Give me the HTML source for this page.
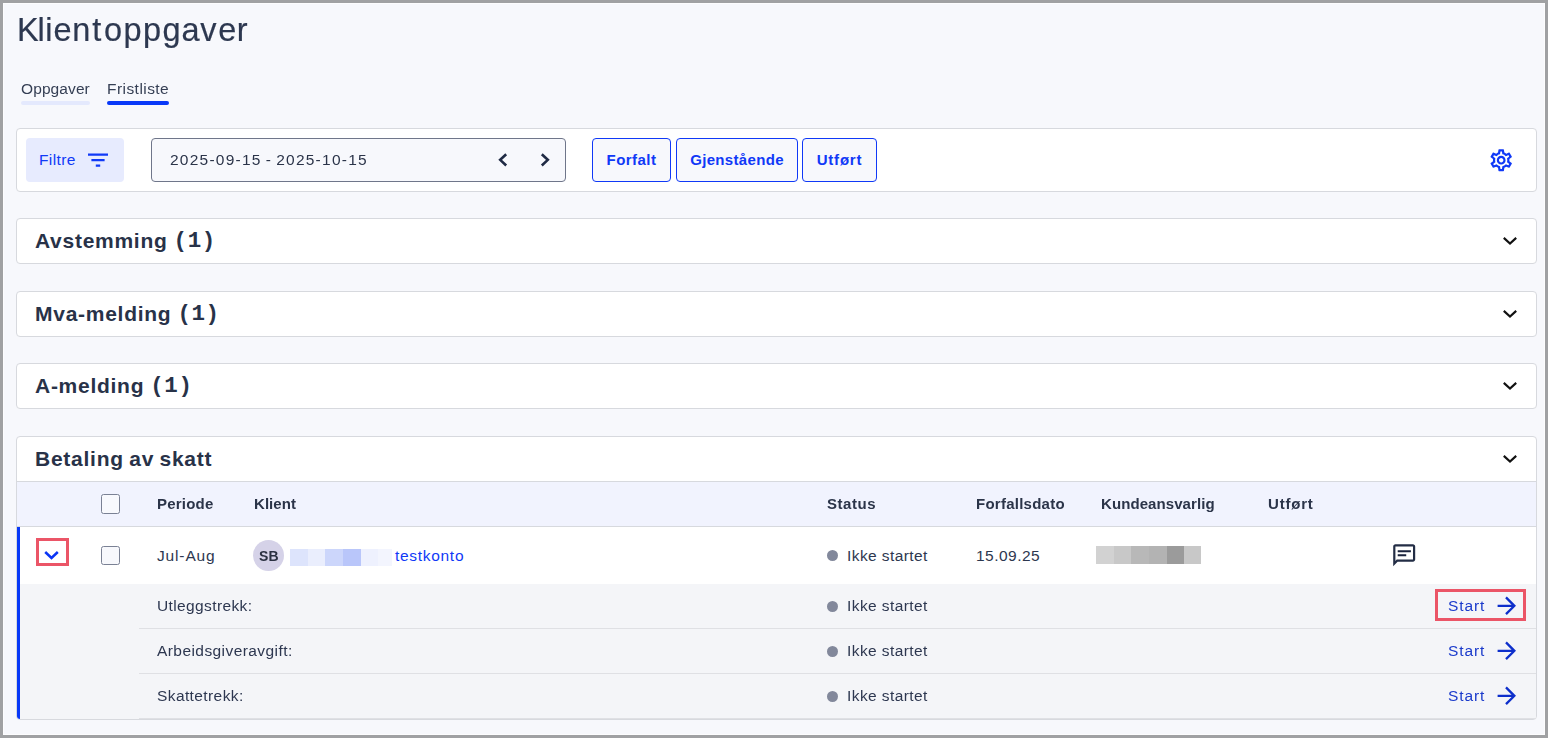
<!DOCTYPE html>
<html lang="no">
<head>
<meta charset="utf-8">
<title>Klientoppgaver</title>
<style>
*{box-sizing:border-box;margin:0;padding:0}
html,body{width:1548px;height:738px;overflow:hidden}
body{font-family:"Liberation Sans",sans-serif;background:#f7f8fc;color:#2b3449;position:relative;font-size:15.5px}
.frame{position:absolute;left:0;top:0;width:1548px;height:738px;border:3px solid #a0a1a3;pointer-events:none;z-index:50;box-shadow:inset 0 0 0 1px #fdfdfe}
.abs{position:absolute}
.g{will-change:transform}
.t{position:absolute;white-space:nowrap;line-height:20px}
h1.t{-webkit-text-stroke:0.2px;font-size:32.5px;font-weight:400;line-height:40px;left:16.5px;top:10px;color:#2d3850}
.tab{font-size:15.5px;top:79px;color:#353f54}
.ul{position:absolute;height:4px;border-radius:2px;top:101px}
.card{position:absolute;left:16px;width:1521px;background:#fff;border:1px solid #d7d9de;border-radius:4px}
.btn{position:absolute;top:138px;height:44px;border:1px solid #1039f7;border-radius:4px;background:#f7f8fc;color:#1039f7;font-weight:700;font-size:15px;line-height:42px;text-align:center;white-space:nowrap}
.acc{font-size:21px;font-weight:700;line-height:24px;left:35px;color:#283248;letter-spacing:0.73px}
.num{font-family:"Liberation Mono",monospace;font-size:22.5px;font-weight:700;letter-spacing:0.6px;margin-left:6px;line-height:20px;position:relative;top:-1px}
.chev{position:absolute;left:1502px;width:16px;height:10px}
.th{font-weight:700;font-size:15px;top:494px;color:#2b3449}
.td{font-size:15.5px;color:#2d3750}
.dot{position:absolute;left:827px;width:11px;height:11px;border-radius:50%;background:#82889b}
.cb{position:absolute;left:101px;width:19px;height:19px;border:1px solid #7a8194;border-radius:2.5px}
.sep{position:absolute;left:139px;width:1397px;height:1px;background:#dfe0e4}
.start{font-size:15.5px;color:#1a3acb;left:1448px;letter-spacing:0.9px}
.arrow{position:absolute;left:1492.7px;width:27.6px;height:27.6px}
</style>
</head>
<body>
<h1 class="t g"><span style="letter-spacing:-1.2px">K</span><span style="letter-spacing:0.6px">l</span><span style="letter-spacing:0.9px">i</span><span style="letter-spacing:0.75px">e</span><span style="letter-spacing:2.0px">n</span><span style="letter-spacing:2.6px">t</span><span style="letter-spacing:1.5px">o</span><span style="letter-spacing:1.3px">p</span><span style="letter-spacing:1.5px">p</span><span style="letter-spacing:0.9px">g</span><span style="letter-spacing:0.7px">a</span><span style="letter-spacing:1.8px">v</span><span style="letter-spacing:0.4px">e</span><span style="letter-spacing:0px">r</span></h1>

<span class="t tab g" style="left:20.5px;letter-spacing:0.1px">Oppgaver</span>
<span class="t tab g" style="left:107px;letter-spacing:0.45px">Fristliste</span>
<div class="ul" style="left:21px;width:69px;background:#e4e9fd"></div>
<div class="ul" style="left:107px;width:62px;background:#0838f8"></div>

<!-- filter bar -->
<div class="card" style="top:128px;height:64px"></div>
<div class="abs" style="left:26px;top:138px;width:98px;height:44px;background:#e7ebfe;border-radius:4px"></div>
<span class="t" style="left:39px;top:150px;font-size:15.5px;color:#1039f7;letter-spacing:0.4px">Filtre</span>
<svg class="abs" style="left:88px;top:153px" width="20" height="14" viewBox="0 0 20 14"><path d="M0 0.5h20v2.2H0zM3.4 6h13.2v2.2H3.4zM7.8 11.5h4.4v2.2H7.8z" fill="#1039f7"/></svg>

<div class="abs" style="left:151px;top:138px;width:415px;height:44px;border:1px solid #6f768a;border-radius:4px;background:#f7f8fc"></div>
<span class="t g" style="left:170px;top:150px;font-size:15.5px;color:#2b3449;letter-spacing:1.24px;word-spacing:-1.5px">2025-09-15 - 2025-10-15</span>
<svg class="abs" style="left:496.700px;top:151.800px" width="12" height="16" viewBox="0 0 12 16"><path d="M9.200 2.200L3.200 7.850l6 5.650" fill="none" stroke="#1f2a44" stroke-width="2.600"/></svg>
<svg class="abs" style="left:538.700px;top:151.800px" width="12" height="16" viewBox="0 0 12 16"><path d="M2.800 2.200L8.800 7.850l-6 5.650" fill="none" stroke="#1f2a44" stroke-width="2.600"/></svg>

<div class="btn" style="left:592px;width:79px;letter-spacing:0.45px">Forfalt</div>
<div class="btn" style="left:676px;width:122px;letter-spacing:0.33px">Gjenstående</div>
<div class="btn" style="left:802px;width:75px;letter-spacing:0.8px">Utført</div>

<!-- gear -->
<svg class="abs" style="left:1488px;top:146.5px" width="26.4" height="26.4" viewBox="0 0 24 24"><path fill="#1039f7" d="M19.43 12.98c.04-.32.07-.64.07-.98 0-.34-.03-.66-.07-.98l2.11-1.65c.19-.15.24-.42.12-.64l-2-3.46c-.09-.16-.26-.25-.44-.25-.06 0-.12.01-.17.03l-2.49 1c-.52-.4-1.08-.73-1.69-.98l-.38-2.65C14.46 2.18 14.25 2 14 2h-4c-.25 0-.46.18-.49.42l-.38 2.65c-.61.25-1.17.59-1.69.98l-2.49-1c-.06-.02-.12-.03-.18-.03-.17 0-.34.09-.43.25l-2 3.46c-.13.22-.07.49.12.64l2.11 1.65c-.04.32-.07.65-.07.98 0 .33.03.66.07.98l-2.11 1.65c-.19.15-.24.42-.12.64l2 3.46c.09.16.26.25.44.25.06 0 .12-.01.17-.03l2.49-1c.52.4 1.08.73 1.69.98l.38 2.65c.03.24.24.42.49.42h4c.25 0 .46-.18.49-.42l.38-2.65c.61-.25 1.17-.59 1.69-.98l2.49 1c.06.02.12.03.18.03.17 0 .34-.09.43-.25l2-3.46c.12-.22.07-.49-.12-.64l-2.11-1.65zm-1.98-1.71c.04.31.05.52.05.73 0 .21-.02.43-.05.73l-.14 1.13.89.7 1.08.84-.7 1.21-1.27-.51-1.04-.42-.9.68c-.43.32-.84.56-1.25.73l-1.06.43-.16 1.13-.2 1.35h-1.4l-.19-1.35-.16-1.13-1.06-.43c-.43-.18-.83-.41-1.23-.71l-.91-.7-1.06.43-1.27.51-.7-1.21 1.08-.84.89-.7-.14-1.13c-.03-.31-.05-.54-.05-.74s.02-.43.05-.73l.14-1.13-.89-.7-1.08-.84.7-1.21 1.27.51 1.04.42.9-.68c.43-.32.84-.56 1.25-.73l1.06-.43.16-1.13.2-1.35h1.39l.19 1.35.16 1.13 1.06.43c.43.18.83.41 1.23.71l.91.7 1.06-.43 1.27-.51.7 1.21-1.07.85-.89.7.14 1.13zM12 8c-2.21 0-4 1.790-4 4s1.790 4 4 4 4-1.790 4-4-1.790-4-4-4zm0 6c-1.100 0-2-.9-2-2s.9-2 2-2 2 .9 2 2-.9 2-2 2z"/></svg>

<!-- accordion panels -->
<div class="card" style="top:218px;height:46px"></div>
<span class="t acc" style="top:229px">Avstemming<span class="num">(1)</span></span>
<svg class="chev" style="top:236px" viewBox="0 0 16 10"><path d="M1.8 1.9L8 7.5l6.2-5.6" fill="none" stroke="#111" stroke-width="2.2"/></svg>

<div class="card" style="top:291px;height:46px"></div>
<span class="t acc" style="top:302px;left:35px">Mva-melding<span class="num">(1)</span></span>
<svg class="chev" style="top:309px" viewBox="0 0 16 10"><path d="M1.8 1.9L8 7.5l6.2-5.6" fill="none" stroke="#111" stroke-width="2.2"/></svg>

<div class="card" style="top:363px;height:46px"></div>
<span class="t acc" style="top:374px">A-melding<span class="num">(1)</span></span>
<svg class="chev" style="top:381px" viewBox="0 0 16 10"><path d="M1.8 1.9L8 7.5l6.2-5.6" fill="none" stroke="#111" stroke-width="2.2"/></svg>

<!-- open panel -->
<div class="card" style="top:436px;height:284px;overflow:hidden">
  <div class="abs" style="left:0;top:44px;width:1519px;height:1px;background:#d7d9de"></div>
  <div class="abs" style="left:0;top:45px;width:1519px;height:44px;background:#f1f3fe"></div>
  <div class="abs" style="left:0;top:89px;width:1519px;height:1px;background:#d7d9de"></div>
  <div class="abs" style="left:0;top:147px;width:1519px;height:136px;background:#f4f5f8"></div>
  <div class="abs" style="left:0;top:90px;width:3px;height:194px;background:#0838f8"></div>
</div>
<span class="t acc" style="top:447px;left:35px;letter-spacing:0.75px;word-spacing:-1.2px">Betaling av skatt</span>
<svg class="chev" style="top:454px" viewBox="0 0 16 10"><path d="M1.8 1.9L8 7.5l6.2-5.6" fill="none" stroke="#111" stroke-width="2.2"/></svg>

<div class="cb" style="top:494px;height:20px;background:#f8f9fd"></div>
<span class="t th g" style="left:157px;letter-spacing:0.2px">Periode</span>
<span class="t th g" style="left:254px;letter-spacing:0.05px">Klient</span>
<span class="t th g" style="left:827px;letter-spacing:0.55px">Status</span>
<span class="t th g" style="left:976px;letter-spacing:0.25px">Forfallsdato</span>
<span class="t th g" style="left:1101px;letter-spacing:0.08px">Kundeansvarlig</span>
<span class="t th g" style="left:1268px;letter-spacing:0.8px">Utført</span>

<!-- main row -->
<div class="abs" style="left:36px;top:538px;width:33px;height:28px;border:3px solid #eb5567"></div>
<svg class="abs" style="left:43px;top:549px" width="17" height="12" viewBox="0 0 17 12"><path d="M2.2 3L8.5 9l6.3-6" fill="none" stroke="#0a35f5" stroke-width="2.5"/></svg>
<div class="cb" style="top:546px;background:#f7f8fc"></div>
<span class="t td" style="left:157px;top:546px;letter-spacing:0.85px">Jul-Aug</span>
<div class="abs" style="left:253px;top:540px;width:31px;height:31px;border-radius:50%;background:#d5d2e8"></div>
<span class="t g" style="left:259px;top:546px;font-size:14px;font-weight:700;color:#2b3142;letter-spacing:0.1px">SB</span>
<div class="abs" style="left:290px;top:549px;height:17px;width:102px;display:flex">
  <i style="width:18px;background:#dde4fc"></i><i style="width:17px;background:#eaeefd"></i><i style="width:18px;background:#ccd6fb"></i><i style="width:18px;background:#b9c6fa"></i><i style="width:17px;background:#eef1fe"></i><i style="width:14px;background:#f3f5fe"></i>
</div>
<span class="t td" style="left:395px;top:546px;color:#1039f7;letter-spacing:0.7px">testkonto</span>
<div class="dot" style="top:550px"></div>
<span class="t td" style="left:847px;top:546px;letter-spacing:0.42px">Ikke startet</span>
<span class="t td" style="left:976px;top:546px;letter-spacing:0.48px">15.09.25</span>
<div class="abs" style="left:1096px;top:546px;height:18px;width:105px;display:flex">
  <i style="width:18px;background:#d2d2d2"></i><i style="width:17px;background:#c8c8c8"></i><i style="width:18px;background:#b8b8b8"></i><i style="width:18px;background:#b3b3b3"></i><i style="width:17px;background:#9b9b9b"></i><i style="width:17px;background:#c8c8c8"></i>
</div>
<!-- chat icon -->
<svg class="abs" style="left:1391px;top:541.8px" width="26.4" height="26.4" viewBox="0 0 24 24"><path fill="#232d45" fill-rule="evenodd" d="M4 4h16v12H5.170L4 17.170V4zM4 2c-1.100 0-1.990.9-1.990 2L2 22l4-4h14c1.100 0 2-.9 2-2V4c0-1.100-.9-2-2-2H4z"/><path fill="#1a233c" d="M6.100 7.450h12v1.820h-12zM6.100 11.090h7.750v1.820h-7.750z"/></svg>

<!-- sub rows -->
<span class="t td g" style="left:157px;top:596px;letter-spacing:0.38px">Utleggstrekk:</span>
<div class="dot" style="top:601px"></div>
<span class="t td g" style="left:847px;top:596px;letter-spacing:0.42px">Ikke startet</span>
<div class="abs" style="left:1435px;top:589px;width:91px;height:32px;border:3px solid #eb5567"></div>
<span class="t start g" style="top:596px">Start</span>
<svg class="arrow" style="top:592px" viewBox="0 0 24 24"><path fill="#0d2fcb" d="M12 4l-1.410 1.410L16.170 11H4v2h12.170l-5.580 5.590L12 20l8-8z"/></svg>
<div class="sep" style="top:628px"></div>

<span class="t td g" style="left:157px;top:641px;letter-spacing:0.43px">Arbeidsgiveravgift:</span>
<div class="dot" style="top:646px"></div>
<span class="t td g" style="left:847px;top:641px;letter-spacing:0.42px">Ikke startet</span>
<span class="t start g" style="top:641px">Start</span>
<svg class="arrow" style="top:637px" viewBox="0 0 24 24"><path fill="#0d2fcb" d="M12 4l-1.410 1.410L16.170 11H4v2h12.170l-5.580 5.590L12 20l8-8z"/></svg>
<div class="sep" style="top:673px"></div>

<span class="t td g" style="left:157px;top:686px;letter-spacing:0.4px">Skattetrekk:</span>
<div class="dot" style="top:691px"></div>
<span class="t td g" style="left:847px;top:686px;letter-spacing:0.42px">Ikke startet</span>
<span class="t start g" style="top:686px">Start</span>
<svg class="arrow" style="top:682px" viewBox="0 0 24 24"><path fill="#0d2fcb" d="M12 4l-1.410 1.410L16.170 11H4v2h12.170l-5.580 5.590L12 20l8-8z"/></svg>
<div class="sep" style="top:718px"></div>

<div class="frame"></div>
</body>
</html>
